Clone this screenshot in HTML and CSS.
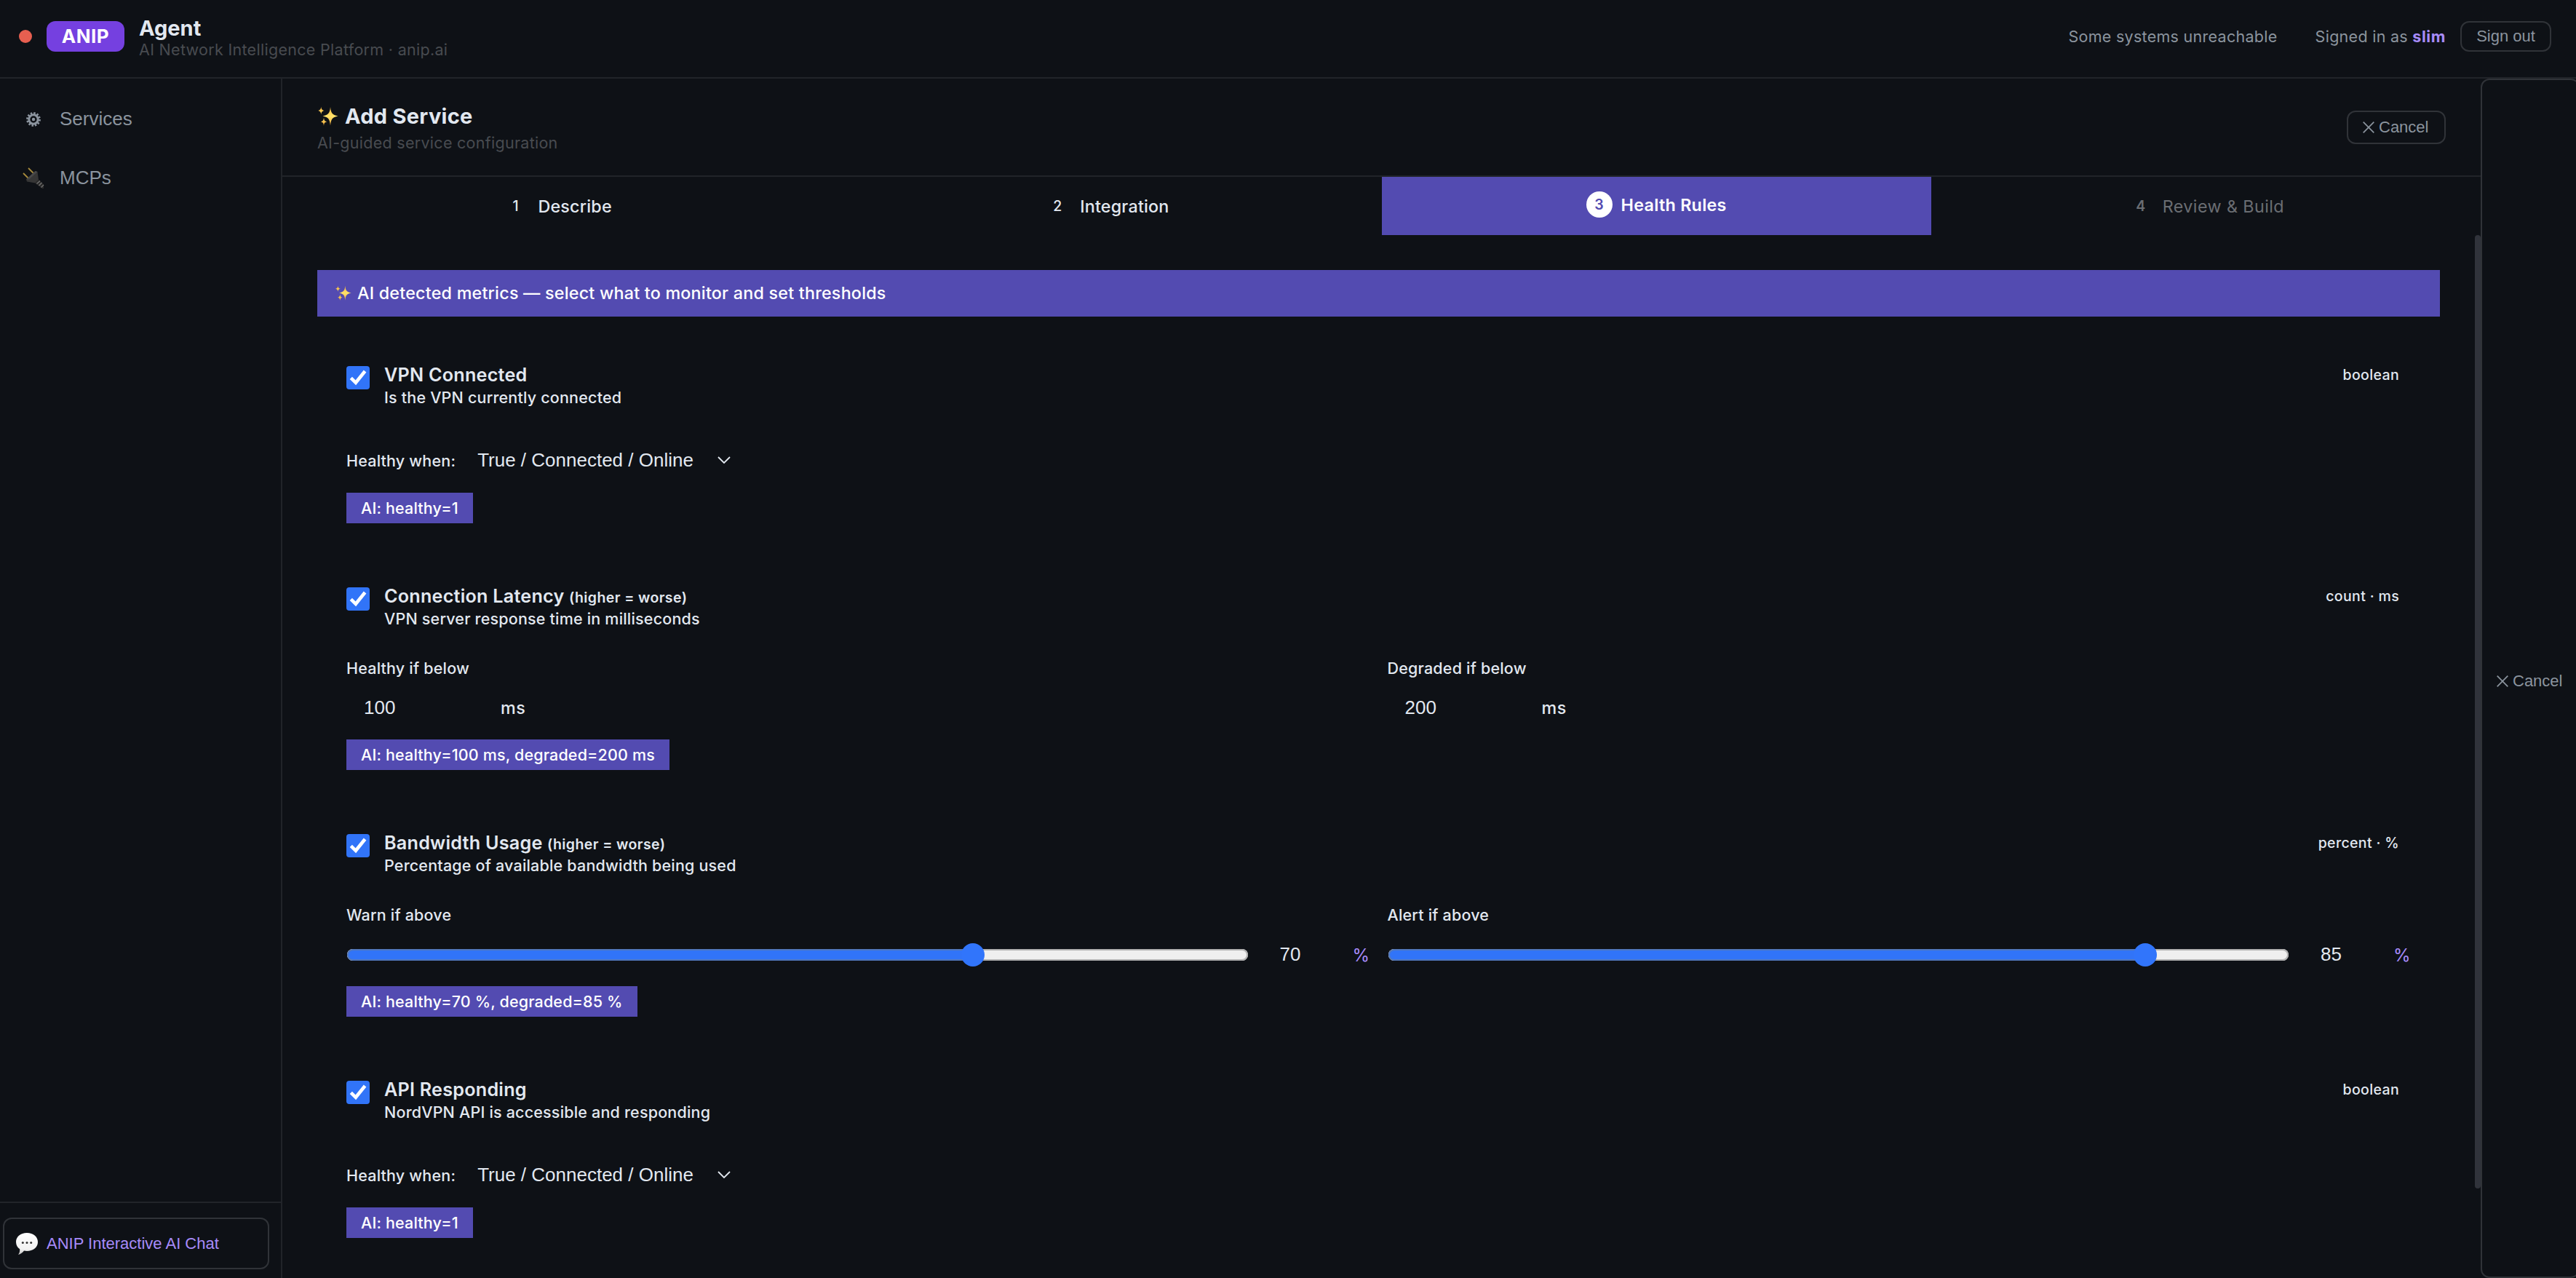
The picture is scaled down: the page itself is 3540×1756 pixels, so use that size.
FILE: index.html
```html
<!DOCTYPE html>
<html lang="en">
<head>
<meta charset="utf-8">
<title>ANIP Agent</title>
<link rel="stylesheet" href="styles.css">
</head>
<body>
<svg class="defs" aria-hidden="true">
  <defs>
    <linearGradient id="gold" x1="0" y1="0" x2="0" y2="1"><stop offset="0" stop-color="#f3b33d"/><stop offset=".5" stop-color="#ffe26a"/><stop offset="1" stop-color="#eda63a"/></linearGradient>
    <linearGradient id="bubble" x1="0" y1="0" x2="0" y2="1"><stop offset="0" stop-color="#fff"/><stop offset=".75" stop-color="#f1f1f1"/><stop offset="1" stop-color="#bdbdbd"/></linearGradient>
    <symbol id="sparkles" viewBox="0 0 28 28">
      <path fill="url(#gold)" d="M17 1C17.9 9.500 19.500 11.600 27.500 13.500C19.500 15.300 17.900 17.500 17 26.500C16.100 17.500 14.500 15.300 6.500 13.500C14.500 11.600 16.100 9.500 17 1ZM4.300.5C4.700 4.200 5.400 5 8.600 6C5.400 7 4.700 7.800 4.300 11.500C3.900 7.800 3.200 7 0 6C3.200 5 3.900 4.200 4.300.5ZM8 15.500C8.400 19.300 9 20.200 12.200 21.300C9 22.300 8.400 23.200 8 27C7.600 23.200 7 22.300 3.800 21.300C7 20.200 7.600 19.300 8 15.500Z"/>
    </symbol>
    <symbol id="check" viewBox="0 0 32 32"><path d="M6.300 16.300L12.900 22.800L25.600 7" fill="none" stroke="#fff" stroke-width="4.600"/></symbol>
    <symbol id="close" viewBox="0 0 16 16"><path d="M.7.7L15.300 15.300M15.300.7L.7 15.300" fill="none" stroke="currentColor" stroke-width="1.700"/></symbol>
    <symbol id="chevron" viewBox="0 0 18 10"><path d="M1 1L9 9L17 1" fill="none" stroke="currentColor" stroke-width="1.800"/></symbol>
  </defs>
</svg>
<div class="app">
  <header class="topbar">
    <span class="status-dot"></span>
    <span class="logo">ANIP</span>
    <div class="brand">
      <div class="brand-name">Agent</div>
      <div class="brand-sub">AI Network Intelligence Platform · anip.ai</div>
    </div>
    <span class="system-status">Some systems unreachable</span>
    <span class="signed-in">Signed in as <b>slim</b></span>
    <button class="btn sign-out">Sign out</button>
  </header>

  <div class="body">
    <aside class="sidebar">
      <nav class="nav">
        <a class="nav-item"><span class="nav-icon">
          <svg width="20" height="20" viewBox="0 0 20 20"><g stroke="#8b949e" fill="none"><circle cx="10" cy="10" r="8.400" stroke-width="3" stroke-dasharray="2.400 1.998"/><circle cx="10" cy="10" r="6.200" stroke-width="3"/></g><circle cx="10" cy="10" r="2.200" fill="#8b949e"/></svg>
        </span>Services</a>
        <a class="nav-item"><span class="nav-icon">
          <svg width="30" height="30" viewBox="0 0 30 30"><path d="M8 1L15 8M1 8L8.500 15.500" stroke="#a58a3c" stroke-width="1.800"/><path d="M17.500 5L20.500 6L22 17.500L17.500 21.500L6 19.500L5 16.500Z" fill="#363636"/><path d="M17.500 5L20.500 6L9 16.500L5 16.500Z" fill="#494949"/><path d="M22 16.500L29 23.500V29H27L17 21.500Z" fill="#2a2a2a"/><path d="M19.500 22.500L24 18.500M22.500 25L26.500 21M25.500 27.500L29 24" stroke="#777" stroke-width="1.100"/></svg>
        </span>MCPs</a>
      </nav>
      <div class="side-foot">
        <button class="chat">
          <svg width="30" height="30" viewBox="0 0 30 30"><path d="M15 0C23.500 0 30 5.200 30 12.500S23.500 25 15 25C13.500 25 12.300 24.900 11 24.600C9 27.500 6 29.500 3 29.900C4.800 28 5.400 25.500 5.200 22.300C2 20.200 0 16.700 0 12.500C0 5.200 6.500 0 15 0Z" fill="url(#bubble)"/><g fill="#333"><circle cx="9.300" cy="13.500" r="1.500"/><circle cx="15" cy="13.500" r="1.500"/><circle cx="20.700" cy="13.500" r="1.500"/></g></svg>
          ANIP Interactive AI Chat
        </button>
      </div>
    </aside>

    <main class="main">
      <div class="page-head">
        <div class="page-titles">
          <h1><svg width="28" height="28"><use href="#sparkles"/></svg>Add Service</h1>
          <p>AI-guided service configuration</p>
        </div>
        <button class="btn cancel"><svg width="16" height="16"><use href="#close"/></svg>Cancel</button>
      </div>

      <div class="steps">
        <div class="step"><span class="num">1</span>Describe</div>
        <div class="step"><span class="num">2</span>Integration</div>
        <div class="step active"><span class="num">3</span>Health Rules</div>
        <div class="step todo"><span class="num">4</span>Review &amp; Build</div>
      </div>

      <div class="scroller">
        <div class="content">
          <div class="banner"><svg width="22" height="22"><use href="#sparkles"/></svg>AI detected metrics — select what to monitor and set thresholds</div>

          <section class="card">
            <div class="card-head">
              <span class="checkbox"><svg width="32" height="32"><use href="#check"/></svg></span>
              <div class="metric"><h2>VPN Connected</h2><p>Is the VPN currently connected</p></div>
              <span class="type">boolean</span>
            </div>
            <div class="bool-row"><span class="label">Healthy when:</span><span class="select">True / Connected / Online<svg width="18" height="10"><use href="#chevron"/></svg></span></div>
            <span class="hint">AI: healthy=1</span>
          </section>

          <section class="card">
            <div class="card-head">
              <span class="checkbox"><svg width="32" height="32"><use href="#check"/></svg></span>
              <div class="metric"><h2>Connection Latency <small>(higher = worse)</small></h2><p>VPN server response time in milliseconds</p></div>
              <span class="type">count · ms</span>
            </div>
            <div class="fields">
              <div class="field"><span class="label">Healthy if below</span><div class="field-row"><span class="number">100</span><span class="unit">ms</span></div></div>
              <div class="field"><span class="label">Degraded if below</span><div class="field-row"><span class="number">200</span><span class="unit">ms</span></div></div>
            </div>
            <span class="hint">AI: healthy=100 ms, degraded=200 ms</span>
          </section>

          <section class="card">
            <div class="card-head">
              <span class="checkbox"><svg width="32" height="32"><use href="#check"/></svg></span>
              <div class="metric"><h2>Bandwidth Usage <small>(higher = worse)</small></h2><p>Percentage of available bandwidth being used</p></div>
              <span class="type">percent · %</span>
            </div>
            <div class="fields">
              <div class="field"><span class="label">Warn if above</span><div class="field-row"><div class="slider" style="--value:.7"><div class="fill"></div><div class="thumb"></div></div><span class="number short">70</span><span class="percent">%</span></div></div>
              <div class="field"><span class="label">Alert if above</span><div class="field-row"><div class="slider" style="--value:.85"><div class="fill"></div><div class="thumb"></div></div><span class="number short">85</span><span class="percent">%</span></div></div>
            </div>
            <span class="hint">AI: healthy=70 %, degraded=85 %</span>
          </section>

          <section class="card">
            <div class="card-head">
              <span class="checkbox"><svg width="32" height="32"><use href="#check"/></svg></span>
              <div class="metric"><h2>API Responding</h2><p>NordVPN API is accessible and responding</p></div>
              <span class="type">boolean</span>
            </div>
            <div class="bool-row"><span class="label">Healthy when:</span><span class="select">True / Connected / Online<svg width="18" height="10"><use href="#chevron"/></svg></span></div>
            <span class="hint">AI: healthy=1</span>
          </section>
        </div>
        <div class="scrollbar"></div>
      </div>
    </main>

    <button class="btn side-cancel"><svg width="16" height="16"><use href="#close"/></svg>Cancel</button>
  </div>
</div>
</body>
</html>
```
FILE: styles.css
```css
* { box-sizing: border-box; margin: 0; padding: 0; }
:root {
  --bg: #0e1116;
  --line: #212429;
  --line-strong: #303338;
  --text: #e2e8f0;
  --muted: #8b949e;
  --accent: #534bb1;
  --lilac: #a78bfa;
  --blue: #3174f8;
}
body {
  background: var(--bg);
  color: var(--text);
  font-family: Inter, sans-serif;
  font-size: 21.5px;
  letter-spacing: .28px;
  overflow: hidden;
}
svg { display: block; flex: none; }
.defs { position: absolute; width: 0; height: 0; }
.app { height: 1756px; display: flex; flex-direction: column; }

/* Top bar */
.topbar {
  flex: none;
  height: 108px;
  padding: 0 34px 6px 26px;
  display: flex;
  align-items: center;
  border-bottom: 2px solid var(--line);
  white-space: nowrap;
}
.status-dot { width: 18px; height: 18px; border-radius: 50%; background: #e75f50; margin-right: 20px; }
.logo {
  width: 107px; height: 42px; line-height: 42px;
  border-radius: 12px;
  background: #7540e0;
  color: #fff;
  text-align: center;
  font-size: 26px; font-weight: 700; letter-spacing: .5px;
  margin-right: 20px;
}
.brand { flex: 1; padding-top: 3px; }
.brand-name { font-size: 29px; font-weight: 700; line-height: 34px; letter-spacing: 0; }
.brand-sub { line-height: 25px; color: #484b50; letter-spacing: .3px; }
.system-status { color: var(--muted); margin-right: 52px; }
.signed-in { color: var(--muted); margin-right: 20px; }
.signed-in b { color: var(--lilac); font-weight: 700; letter-spacing: .6px; }
.btn {
  font: 22px/1 "Liberation Sans", sans-serif;
  letter-spacing: 0;
  color: var(--muted);
  background: transparent;
  border: 2px solid var(--line-strong);
  border-radius: 12px;
}
.sign-out { width: 125px; height: 42px; padding-bottom: 1px; }

/* Columns */
.body { flex: 1; min-height: 0; display: grid; grid-template-columns: 388px 1fr 131px; }
.sidebar { border-right: 2px solid var(--line); display: flex; flex-direction: column; justify-content: space-between; }
.nav { padding-top: 15px; display: flex; flex-direction: column; gap: 1px; }
.nav-item {
  height: 80px; padding-left: 26px;
  display: flex; align-items: center; gap: 16px;
  font: 26px/80px "Liberation Sans", sans-serif;
  letter-spacing: 0;
  color: var(--muted);
}
.nav-icon { width: 40px; padding-top: 2px; display: flex; justify-content: center; }
.side-foot { height: 105px; border-top: 2px solid var(--line); padding: 20px 16px 0 4px; }
.chat {
  width: 100%; height: 71px;
  display: flex; align-items: center; gap: 12px;
  padding-left: 16px;
  font: 22px/1 "Liberation Sans", sans-serif;
  color: var(--lilac);
  background: transparent;
  border: 2px solid var(--line-strong);
  border-radius: 12px;
}
.main { min-width: 0; min-height: 0; display: flex; flex-direction: column; }
.side-cancel {
  width: 136px;
  display: flex; align-items: center; gap: 6px;
  padding: 7px 0 0 20px;
}

/* Page head */
.page-head {
  flex: none; height: 135px; padding: 0 48px;
  display: flex; justify-content: space-between; align-items: center;
  border-bottom: 2px solid var(--line);
}
.page-titles { padding-top: 7px; line-height: 36px; }
.page-titles h1 { display: flex; align-items: center; gap: 9px; padding-left: 1px; font-size: 29px; font-weight: 700; }
.page-titles p { color: #484b50; }
.cancel { width: 136px; height: 46px; display: flex; align-items: center; gap: 6px; padding-left: 20px; }

/* Steps */
.steps { flex: none; height: 80px; display: grid; grid-template-columns: repeat(4, 1fr); }
.step {
  display: flex; align-items: center; justify-content: center; gap: 13px;
  font-size: 23.3px; font-weight: 500; letter-spacing: .2px;
}
.step .num {
  width: 36px; height: 36px; line-height: 36px;
  border-radius: 50%;
  text-align: center;
  font-size: 19.5px; letter-spacing: 0;
}
.step.active { background: var(--accent); color: #fff; font-weight: 600; border-bottom: 4px solid var(--accent); gap: 12px; letter-spacing: .28px; }
.step.active .num { background: #fff; color: var(--accent); }
.step.todo { color: #6a6d72; font-weight: 400; letter-spacing: .42px; gap: 12px; }
.step.todo .num { font-weight: 600; }

/* Content */
.scroller { flex: 1; min-height: 0; overflow: hidden; display: flex; }
.content { flex: 1; padding: 48px 48px 0; }
.scrollbar { flex: none; width: 8px; height: 1310px; border-radius: 4px; background: #30333b; }
.banner {
  height: 64px; padding: 0 0 1px 25px; margin-bottom: 64px;
  display: flex; align-items: center; gap: 8px;
  background: var(--accent); color: #fff;
  font-size: 23.3px; font-weight: 500; letter-spacing: .22px;
}
.card { padding: 0 40px 84px; font-weight: 500; letter-spacing: .19px; }
.card-head { height: 63px; display: flex; }
.checkbox { width: 32px; height: 32px; margin: 4px 20px 0 0; border-radius: 4px; background: var(--blue); }
.metric { flex: 1; }
.metric h2 { font-size: 25.2px; font-weight: 600; line-height: 32px; letter-spacing: .22px; }
.metric small { font-size: 19.5px; line-height: 1; letter-spacing: .4px; }
.metric p { line-height: 31px; }
.type { font-size: 19.5px; line-height: 32px; letter-spacing: .35px; margin-right: 16px; }
.bool-row { margin-top: 39px; height: 64px; display: flex; align-items: center; gap: 30px; }
.select {
  display: flex; align-items: center; gap: 33px;
  font: 26px/1 "Liberation Sans", sans-serif; letter-spacing: 0;
  padding-bottom: 2px;
}
.hint {
  display: block; width: fit-content;
  height: 42px; line-height: 42px; padding: 0 20px; margin-top: 12px;
  background: var(--accent); color: #fff; letter-spacing: .15px;
}
.fields { margin: 37px 0 17px; display: grid; grid-template-columns: 1fr 1fr; gap: 24px; }
.fields + .hint { margin-top: 0; }
.field .label { display: block; line-height: 30px; margin-bottom: 12px; }
.field-row { height: 54px; display: flex; align-items: center; }
.number {
  width: 200px; padding-left: 24px; margin-right: 12px;
  font: 26px/1 "Liberation Sans", sans-serif; letter-spacing: 0;
}
.number.short { width: 112px; margin-left: 20px; }
.unit { font-size: 23.3px; letter-spacing: .6px; padding-top: 1px; }
.percent { color: var(--lilac); font-size: 24px; font-weight: 400; padding-top: 2px; width: 24px; }

/* Range slider: --value is the 0..1 position of the thumb */
.slider {
  --pos: calc(16px + (100% - 32px) * var(--value));
  position: relative;
  flex: 1; height: 16px; margin: 2px 0 0 1px;
  border-radius: 8px;
  background: #efefef;
  box-shadow: inset 0 0 0 2px #b2b2b2;
}
.fill { width: var(--pos); height: 16px; border-radius: 8px 0 0 8px; background: var(--blue); border: 2px solid #5078bf; border-right: 0; }
.thumb { position: absolute; left: calc(var(--pos) - 16px); top: -8px; width: 32px; height: 32px; border-radius: 50%; background: #3175fb; }
```
